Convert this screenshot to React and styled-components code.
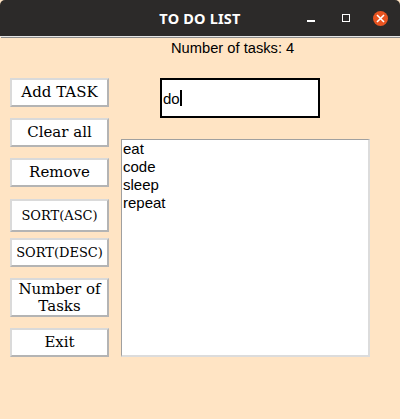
import styled, { createGlobalStyle } from "styled-components";

const GlobalStyle = createGlobalStyle`
	body {
		margin: 0;
		background: #ffe4c4;
	}
`;

const Window = styled.div`
	width: 400px;
	height: 419px;
	background: #ffe4c4;
	overflow: hidden;
`;

const TitleBar = styled.div`
	display: grid;
	grid-template-columns: 1fr auto 1fr;
	align-items: center;
	height: 36px;
	background: #2c2a29;
	border-radius: 5px 5px 0 0;
	border-bottom: 1px solid #e6e6e6;
`;

const Title = styled.div`
	grid-column: 2;
	color: #ffffff;
	font-family: "Noto Sans", sans-serif;
	font-weight: 700;
	font-size: 14.5px;
	letter-spacing: 0.2px;
`;

const Controls = styled.div`
	grid-column: 3;
	justify-self: end;
	display: flex;
	align-items: center;
	gap: 20px;
	padding-right: 12px;
`;

const Control = styled.div`
	width: 15px;
	height: 15px;
	display: flex;
	align-items: center;
	justify-content: center;
`;

const MinLine = styled.div`
	width: 8px;
	height: 1.5px;
	margin-top: 6px;
	background: #ffffff;
`;

const MaxBox = styled.div`
	width: 6px;
	height: 6px;
	border: 1.5px solid #ffffff;
`;

const Close = styled.div`
	width: 15px;
	height: 15px;
	border-radius: 50%;
	background: #e95420;
	display: flex;
	align-items: center;
	justify-content: center;
`;

const Body = styled.div`
	border-top: 1px solid #8c8c8c;
	margin-left: 1px;
`;

const Header = styled.div`
	height: 40px;
	padding-left: 170px;
	font-family: "Liberation Sans", sans-serif;
	font-size: 14.7px;
	line-height: 17px;
	padding-top: 2px;
	box-sizing: border-box;
	color: #000;
`;

const Main = styled.div`
	display: flex;
	padding-left: 9px;
`;

const Buttons = styled.div`
	display: flex;
	flex-direction: column;
	width: 99px;
`;

const Button = styled.button`
	box-sizing: border-box;
	width: 99px;
	height: ${(p) => p.$h || 29}px;
	margin-top: ${(p) => p.$gap || 0}px;
	padding: 0;
	background: #ffffff;
	border: 2px solid;
	border-color: #dadada #b4b4b4 #b4b4b4 #dadada;
	font-family: "DejaVu Serif", serif;
	font-size: ${(p) => p.$size || 15}px;
	line-height: 17px;
	color: #000;
	text-align: center;
`;

const Right = styled.div`
	display: flex;
	flex-direction: column;
	margin-left: 12px;
`;

const Entry = styled.div`
	box-sizing: border-box;
	width: 160px;
	height: 40px;
	margin-left: 39px;
	border: 2px solid #000;
	background: #ffffff;
	display: flex;
	align-items: center;
	padding-left: 1px;
	font-family: "Liberation Sans", sans-serif;
	font-size: 15px;
	color: #000;
`;

const Caret = styled.span`
	display: inline-block;
	width: 2px;
	height: 16px;
	background: #000;
`;

const ListBox = styled.div`
	box-sizing: border-box;
	width: 249px;
	height: 218px;
	margin-top: 21px;
	background: #ffffff;
	border-style: solid;
	border-width: 1px 2px 2px 1px;
	border-color: #a0a0a0 #dcdcdc #dcdcdc #a0a0a0;
	padding-left: 1px;
	font-family: "Liberation Sans", sans-serif;
	font-size: 15px;
	line-height: 18px;
	color: #000;
`;

const Item = styled.div``;

const tasks = ["eat", "code", "sleep", "repeat"];

export default function App() {
	return (
		<Window>
			<GlobalStyle />
			<TitleBar>
				<Title>TO DO LIST</Title>
				<Controls>
					<Control>
						<MinLine />
					</Control>
					<Control>
						<MaxBox />
					</Control>
					<Close>
						<svg width="9" height="9" viewBox="0 0 9 9">
							<path d="M1 1L8 8M8 1L1 8" stroke="#ffffff" strokeWidth="1.6" />
						</svg>
					</Close>
				</Controls>
			</TitleBar>
			<Body>
				<Header>Number of tasks: {tasks.length}</Header>
				<Main>
					<Buttons>
						<Button>Add TASK</Button>
						<Button $gap={11}>Clear all</Button>
						<Button $gap={11}>Remove</Button>
						<Button $gap={12} $h={33} $size={13}>
							SORT(ASC)
						</Button>
						<Button $gap={6} $size={13}>
							SORT(DESC)
						</Button>
						<Button $gap={11} $h={39}>
							Number of
							<br />
							Tasks
						</Button>
						<Button $gap={11}>Exit</Button>
					</Buttons>
					<Right>
						<Entry>
							do
							<Caret />
						</Entry>
						<ListBox>
							{tasks.map((t) => (
								<Item key={t}>{t}</Item>
							))}
						</ListBox>
					</Right>
				</Main>
			</Body>
		</Window>
	);
}
